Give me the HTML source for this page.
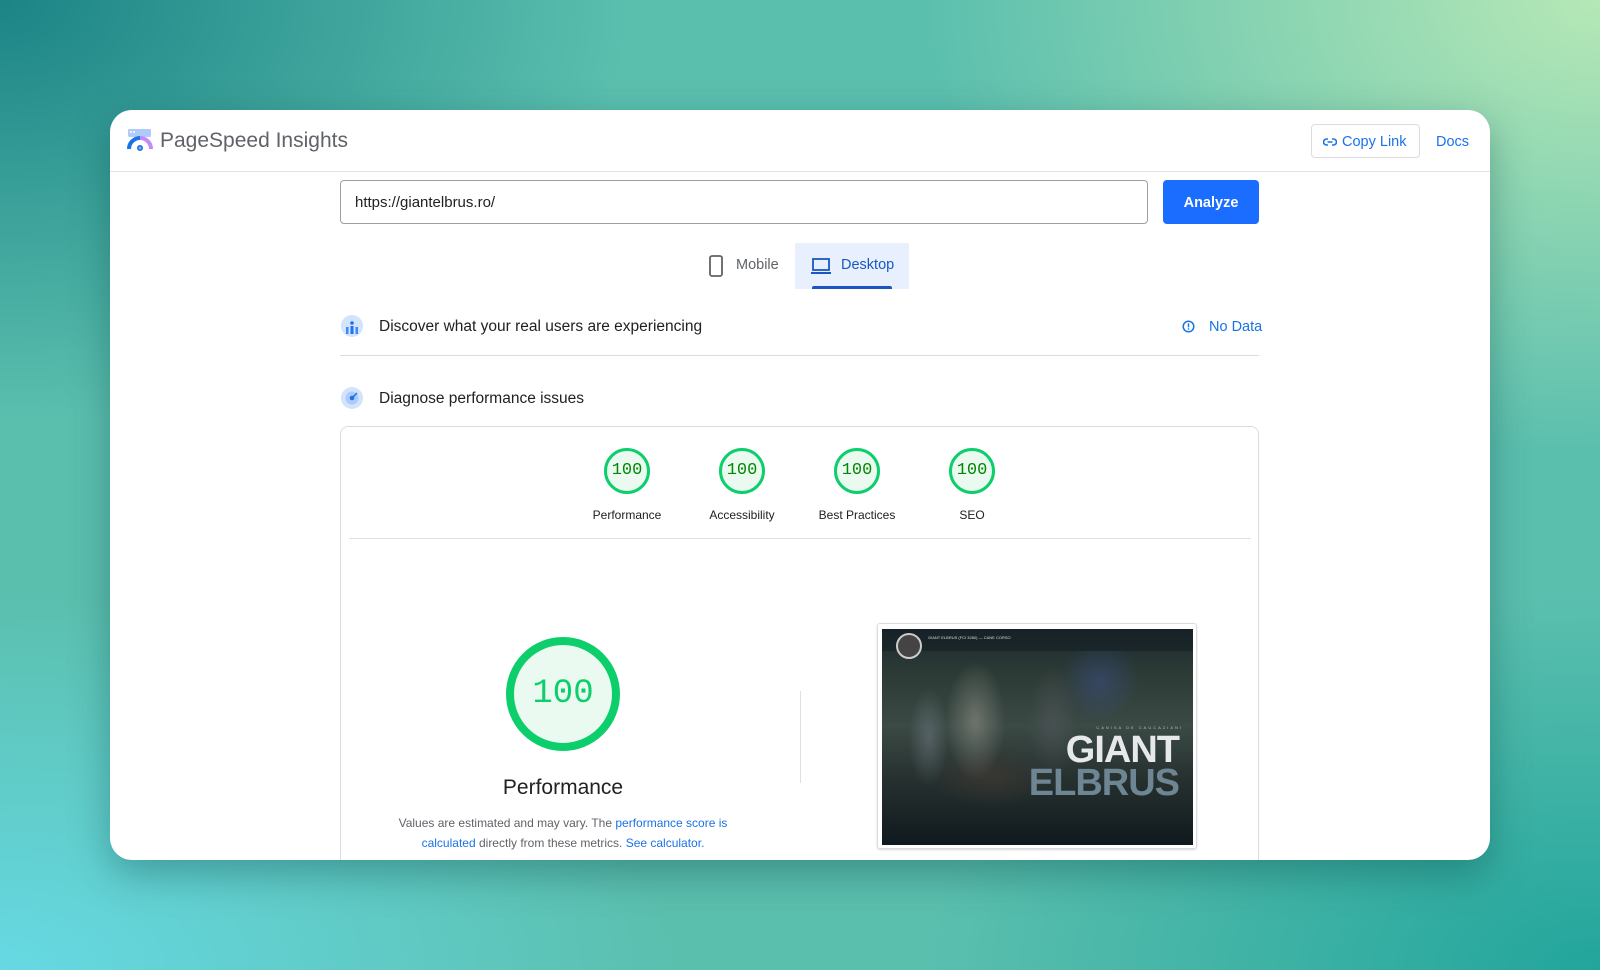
<!DOCTYPE html>
<html><head><meta charset="utf-8"><style>
*{box-sizing:border-box;margin:0;padding:0}
body{width:1600px;height:970px;overflow:hidden;position:relative;font-family:"Liberation Sans",sans-serif;
background:
radial-gradient(ellipse 900px 600px at 0% 0%,#1c8486 0%,rgba(28,132,134,0) 70%),
radial-gradient(ellipse 900px 600px at 100% 0%,#b6e8b6 0%,rgba(182,232,182,0) 75%),
radial-gradient(ellipse 900px 500px at 0% 100%,#66d9e3 0%,rgba(102,217,227,0) 75%),
radial-gradient(ellipse 900px 500px at 100% 100%,#22a59c 0%,rgba(34,165,156,0) 75%),
#5bbfae}
.card{position:absolute;left:110px;top:110px;width:1380px;height:750px;background:#fff;border-radius:22px;overflow:hidden;box-shadow:0 14px 40px rgba(0,60,60,.35)}
.abs{position:absolute}
.hdr{position:absolute;left:0;top:0;width:1380px;height:62px;border-bottom:1px solid #e2e2e2}
.blue{color:#1a73e8}
.g{width:46px;height:46px;border:3.5px solid #0cce6b;border-radius:50%;background:#eafaf1;font-family:'Liberation Mono',monospace;font-size:17px;color:#008800;text-align:center;line-height:39px;top:338px}
.gl{top:398px;width:160px;text-align:center;font-size:12px;color:#202124}
</style></head><body>
<div class="card">
 <div class="hdr"></div>
 <svg class="abs" style="left:16px;top:18px" width="28" height="24" viewBox="0 0 28 24">
  <rect x="2" y="1" width="23" height="8" rx="1.5" fill="#aecbfa"/>
  <circle cx="5" cy="4" r="1" fill="#fff"/><circle cx="8" cy="4" r="1" fill="#fff"/>
  <path d="M3 21 A11 11 0 0 1 14 10" stroke="#1a73e8" stroke-width="4" fill="none"/>
  <path d="M14 10 A11 11 0 0 1 25 21" stroke="#c58af9" stroke-width="4" fill="none"/>
  <circle cx="14" cy="20" r="3" fill="#1a73e8"/><circle cx="14" cy="20" r="1.3" fill="#8ab4f8"/>
 </svg>
 <div class="abs" style="left:50px;top:19px;font-size:21px;color:#5f6368">PageSpeed Insights</div>
 <div class="abs" style="left:1201px;top:14px;width:109px;height:34px;border:1px solid #dadce0;border-radius:4px;color:#1a73e8;font-size:14.5px;line-height:34px;padding-left:30px">Copy Link</div>
 <svg class="abs" style="left:1213px;top:26px" width="14" height="12" viewBox="0 0 14 12"><path d="M5 3H3.5a3 3 0 0 0 0 6H5M9 3h1.5a3 3 0 0 1 0 6H9M4.5 6h5" stroke="#1a73e8" stroke-width="1.6" fill="none"/></svg>
 <div class="abs" style="left:1326px;top:24px;font-size:14.5px;color:#1a73e8">Docs</div>

 <div class="abs" style="left:230px;top:70px;width:808px;height:44px;border:1px solid #9aa0a6;border-radius:4px;font-size:15px;color:#202124;line-height:44px;padding-left:14px">https://giantelbrus.ro/</div>
 <div class="abs" style="left:1053px;top:70px;width:96px;height:44px;background:#1a6dff;border-radius:4px;color:#fff;font-size:14.5px;font-weight:bold;text-align:center;line-height:46px">Analyze</div>

 <svg class="abs" style="left:599px;top:145px" width="14" height="22" viewBox="0 0 14 22"><rect x="1" y="1" width="12" height="20" rx="2" stroke="#5f6368" stroke-width="1.8" fill="none"/></svg>
 <div class="abs" style="left:626px;top:147px;font-size:14.5px;color:#5f6368">Mobile</div>
 <div class="abs" style="left:685px;top:133px;width:114px;height:46px;background:#e8f0fe"></div>
 <div class="abs" style="left:702px;top:176px;width:80px;height:3px;background:#1a57c4;border-radius:2px 2px 0 0"></div>
 <svg class="abs" style="left:700px;top:147px" width="22" height="18" viewBox="0 0 22 18"><rect x="3" y="2" width="16" height="11" stroke="#1a57c4" stroke-width="1.8" fill="none"/><rect x="1" y="15" width="20" height="2" fill="#1a57c4"/></svg>
 <div class="abs" style="left:731px;top:147px;font-size:14.5px;color:#1a57c4">Desktop</div>

 <svg class="abs" style="left:230px;top:204px" width="24" height="24" viewBox="0 0 24 24"><circle cx="12" cy="12" r="11" fill="#d2e3fc"/><circle cx="12" cy="9" r="1.8" fill="#1a73e8"/><rect x="6" y="13" width="2.5" height="7" fill="#4285f4"/><rect x="10.5" y="12" width="3" height="8" fill="#1a73e8"/><rect x="15.5" y="13" width="2.5" height="7" fill="#4285f4"/></svg>
 <div class="abs" style="left:269px;top:208px;font-size:15.5px;color:#202124">Discover what your real users are experiencing</div>
 <svg class="abs" style="left:1072px;top:210px" width="13" height="13" viewBox="0 0 13 13"><circle cx="6.5" cy="6.5" r="5.3" stroke="#1a73e8" stroke-width="1.5" fill="none"/><rect x="5.8" y="3.3" width="1.4" height="4" fill="#1a73e8"/><rect x="5.8" y="8.3" width="1.4" height="1.4" fill="#1a73e8"/></svg>
 <div class="abs" style="left:1099px;top:209px;font-size:14.5px;color:#1a73e8">No Data</div>
 <div class="abs" style="left:230px;top:245px;width:919px;height:1px;background:#dadce0"></div>

 <svg class="abs" style="left:230px;top:276px" width="24" height="24" viewBox="0 0 24 24"><circle cx="12" cy="12" r="11" fill="#d2e3fc"/><circle cx="12" cy="12" r="6.5" fill="#aecbfa"/><circle cx="12" cy="12" r="2.3" fill="#1a73e8"/><path d="M12 12L17 7" stroke="#1a73e8" stroke-width="1.5"/></svg>
 <div class="abs" style="left:269px;top:280px;font-size:15.5px;color:#202124">Diagnose performance issues</div>

 <div class="abs" style="left:230px;top:316px;width:919px;height:460px;border:1px solid #dadce0;border-radius:8px"></div>
 <div class="abs" style="left:239px;top:428px;width:902px;height:1px;background:#e0e0e0"></div>

 <div class="abs g" style="left:494px">100</div>
 <div class="abs gl" style="left:437px">Performance</div>
 <div class="abs g" style="left:609px">100</div>
 <div class="abs gl" style="left:552px">Accessibility</div>
 <div class="abs g" style="left:724px">100</div>
 <div class="abs gl" style="left:667px">Best Practices</div>
 <div class="abs g" style="left:839px">100</div>
 <div class="abs gl" style="left:782px">SEO</div>

 <div class="abs" style="left:396px;top:527px;width:114px;height:114px;border:8px solid #0cce6b;border-radius:50%;background:#eafaf1;font-family:'Liberation Mono',monospace;font-size:34px;color:#0cce6b;text-align:center;line-height:98px">100</div>
 <div class="abs" style="left:303px;top:666px;width:300px;text-align:center;font-size:21px;color:#202124">Performance</div>
 <div class="abs" style="left:281px;top:703px;width:344px;text-align:center;font-size:12px;line-height:20px;color:#5f6368">Values are estimated and may vary. The <span class="blue">performance score is calculated</span> directly from these metrics. <span class="blue">See calculator.</span></div>
 <div class="abs" style="left:690px;top:581px;width:1px;height:92px;background:#e0e0e0"></div>

 <div class="abs" style="left:767px;top:513px;width:320px;height:226px;border:1px solid #dadce0;border-radius:3px;box-shadow:0 1px 2px rgba(0,0,0,.15)"></div>
 <div class="abs" style="left:772px;top:519px;width:311px;height:216px;overflow:hidden;background:linear-gradient(180deg,#1b2a30 0%,#2c3a35 20%,#3b4a45 45%,#26302f 70%,#101a1e 100%)">
  <div class="abs" style="left:0;top:20px;width:311px;height:160px;background:radial-gradient(ellipse 30px 60px at 30% 45%,rgba(150,150,140,.55),transparent),radial-gradient(ellipse 20px 50px at 15% 55%,rgba(120,130,140,.45),transparent),radial-gradient(ellipse 25px 55px at 55% 45%,rgba(80,85,90,.6),transparent),radial-gradient(ellipse 60px 30px at 35% 80%,rgba(60,55,50,.8),transparent),radial-gradient(ellipse 40px 40px at 70% 20%,rgba(60,80,140,.5),transparent)"></div>
  <div class="abs" style="left:0;top:0;width:311px;height:22px;background:rgba(20,30,35,.6)"></div>
  <div class="abs" style="left:14px;top:4px;width:26px;height:26px;border-radius:50%;border:2px solid #ccc;background:#444"></div>
  <div class="abs" style="left:46px;top:6px;font-size:4px;color:#ddd">GIANT ELBRUS (FCI 3280) — CANE CORSO</div>
  <div class="abs" style="right:10px;top:96px;font-size:4px;color:#bbb;letter-spacing:2px">CANISA DE CAUCAZIANI</div>
  <div class="abs" style="right:14px;top:103px;font-size:38px;font-weight:bold;color:#e6e8ea;line-height:36px;letter-spacing:-1px">GIANT</div>
  <div class="abs" style="right:14px;top:136px;font-size:38px;font-weight:bold;color:#6e8593;line-height:36px;letter-spacing:-1px">ELBRUS</div>
 </div>
</div>
</body></html>
